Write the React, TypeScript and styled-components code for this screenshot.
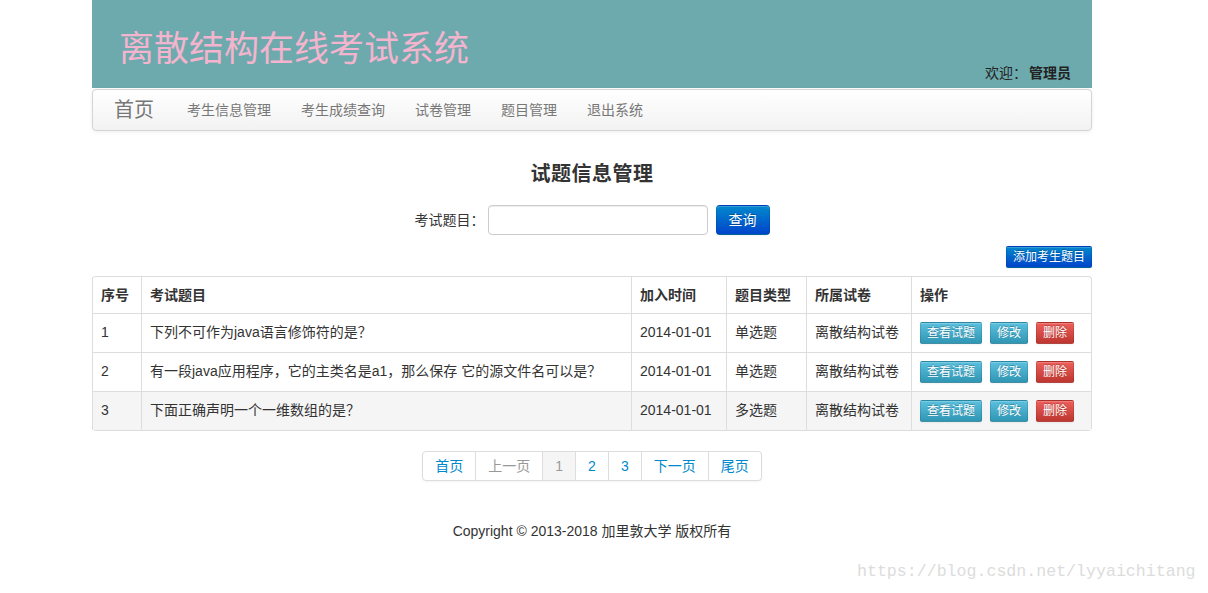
import React from "react";
import styled, { createGlobalStyle, css } from "styled-components";

const FONT = `"Liberation Sans", Arial, "Noto Sans CJK SC", sans-serif`;

const GlobalStyle = createGlobalStyle`
  body {
    margin: 0;
    background: #fff;
    font-family: ${FONT};
    font-size: 14px;
    line-height: 20px;
    color: #333;
  }
`;

const Page = styled.div`
  position: relative;
  min-height: 593px;
`;

const Container = styled.div`
  width: 1000px;
  margin-left: 92px;
`;

const Header = styled.header`
  height: 88px;
  background: #6daaad;
  display: flex;
  align-items: flex-start;
  justify-content: space-between;
  padding: 0 21px 0 27px;
  box-sizing: border-box;
`;

const SiteTitle = styled.h1`
  margin: 28px 0 0;
  font-size: 35px;
  line-height: 42px;
  font-weight: normal;
  color: #f4b4cd;
`;

const Welcome = styled.div`
  align-self: flex-end;
  margin-bottom: 5px;
  font-size: 14px;
  line-height: 20px;
  color: #222;
  b {
    font-weight: bold;
    margin-left: 2px;
  }
`;

const Navbar = styled.nav`
  margin-top: 1px;
  height: 42px;
  box-sizing: border-box;
  border: 1px solid #d4d4d4;
  border-radius: 4px;
  background-image: linear-gradient(to bottom, #ffffff, #f2f2f2);
  box-shadow: 0 1px 4px rgba(0, 0, 0, 0.065);
  display: flex;
  align-items: center;
  padding: 0 20px 0 21px;
`;

const Brand = styled.a`
  font-size: 20px;
  line-height: 20px;
  padding: 10px 18px 10px 0;
  color: #777;
  text-decoration: none;
`;

const NavLink = styled.a`
  font-size: 14px;
  line-height: 20px;
  padding: 10px 15px;
  color: #777;
  text-decoration: none;
`;

const PageTitle = styled.h3`
  margin: 31px 0 19px;
  text-align: center;
  font-size: 20px;
  line-height: 24px;
  font-weight: bold;
  color: #333;
  letter-spacing: 0.5px;
`;

const SearchForm = styled.form`
  display: flex;
  justify-content: center;
  align-items: center;
  margin: 0;
`;

const Label = styled.label`
  font-size: 14px;
  margin-right: 3px;
`;

const Input = styled.input`
  width: 220px;
  height: 30px;
  box-sizing: border-box;
  border: 1px solid #ccc;
  border-radius: 4px;
  box-shadow: inset 0 1px 1px rgba(0, 0, 0, 0.075);
  margin-right: 8px;
  padding: 4px 6px;
  font-family: ${FONT};
`;

type Variant = "primary" | "info" | "danger";

const gradients: Record<Variant, [string, string]> = {
  primary: ["#0088cc", "#0044cc"],
  info: ["#5bc0de", "#2f96b4"],
  danger: ["#ee5f5b", "#bd362f"],
};

const Button = styled.button<{ $variant: Variant; $size?: "mini" }>`
  font-family: ${FONT};
  color: #fff;
  cursor: pointer;
  background-image: linear-gradient(
    to bottom,
    ${(p) => gradients[p.$variant][0]},
    ${(p) => gradients[p.$variant][1]}
  );
  border: 1px solid;
  border-color: rgba(0, 0, 0, 0.1) rgba(0, 0, 0, 0.1) rgba(0, 0, 0, 0.25);
  text-shadow: 0 -1px 0 rgba(0, 0, 0, 0.25);
  box-shadow: inset 0 1px 0 rgba(255, 255, 255, 0.2),
    0 1px 2px rgba(0, 0, 0, 0.05);
  ${(p) =>
    p.$size === "mini"
      ? css`
          font-size: 12px;
          line-height: 20px;
          padding: 0 6px;
          border-radius: 2px;
        `
      : css`
          font-size: 14px;
          line-height: 20px;
          padding: 4px 12px;
          border-radius: 4px;
        `}
`;

const Toolbar = styled.div`
  display: flex;
  justify-content: flex-end;
  margin: 11px 0 8px;
`;

const Table = styled.table`
  width: 1000px;
  box-sizing: border-box;
  border-collapse: separate;
  border-spacing: 0;
  border: 1px solid #ddd;
  border-left: 0;
  border-radius: 4px;
  table-layout: fixed;
`;

const Th = styled.th<{ $w: number }>`
  width: ${(p) => p.$w}px;
  box-sizing: border-box;
  text-align: left;
  font-weight: bold;
  padding: 8px;
  line-height: 20px;
  border-left: 1px solid #ddd;
  vertical-align: top;
`;

const Tr = styled.tr<{ $hover?: boolean }>`
  background: ${(p) => (p.$hover ? "#f5f5f5" : "transparent")};
`;

const Td = styled.td`
  padding: 8px;
  line-height: 20px;
  border-left: 1px solid #ddd;
  border-top: 1px solid #ddd;
  vertical-align: top;
  white-space: nowrap;
`;

const Actions = styled.div`
  display: flex;
  gap: 8px;
`;

const Pagination = styled.div`
  display: flex;
  justify-content: center;
  margin-top: 20px;
`;

const PageList = styled.ul`
  display: flex;
  margin: 0;
  padding: 0;
  list-style: none;
  border-radius: 4px;
  box-shadow: 0 1px 2px rgba(0, 0, 0, 0.05);
`;

const PageItem = styled.li<{ $state?: "disabled" | "active" }>`
  padding: 4px 12px;
  line-height: 20px;
  border: 1px solid #ddd;
  border-left-width: 0;
  color: ${(p) => (p.$state ? "#999" : "#0088cc")};
  background: ${(p) => (p.$state === "active" ? "#f5f5f5" : "#fff")};
  &:first-child {
    border-left-width: 1px;
    border-radius: 4px 0 0 4px;
  }
  &:last-child {
    border-radius: 0 4px 4px 0;
  }
`;

const Footer = styled.footer`
  margin-top: 40px;
  text-align: center;
  font-size: 14px;
  line-height: 20px;
  color: #333;
`;

const Watermark = styled.div`
  position: absolute;
  left: 857px;
  top: 562px;
  font-family: "Liberation Mono", monospace;
  font-size: 16.6px;
  line-height: 20px;
  color: #dcdcdc;
`;

const rows = [
  { id: 1, title: "下列不可作为java语言修饰符的是？", type: "单选题" },
  { id: 2, title: "有一段java应用程序，它的主类名是a1，那么保存 它的源文件名可以是？", type: "单选题" },
  { id: 3, title: "下面正确声明一个一维数组的是？", type: "多选题" },
];

export default function App() {
  return (
    <Page>
      <GlobalStyle />
      <Container>
        <Header>
          <SiteTitle>离散结构在线考试系统</SiteTitle>
          <Welcome>
            欢迎：<b>管理员</b>
          </Welcome>
        </Header>
        <Navbar>
          <Brand>首页</Brand>
          <NavLink>考生信息管理</NavLink>
          <NavLink>考生成绩查询</NavLink>
          <NavLink>试卷管理</NavLink>
          <NavLink>题目管理</NavLink>
          <NavLink>退出系统</NavLink>
        </Navbar>
        <PageTitle>试题信息管理</PageTitle>
        <SearchForm onSubmit={(e) => e.preventDefault()}>
          <Label>考试题目：</Label>
          <Input type="text" />
          <Button $variant="primary" type="submit">
            查询
          </Button>
        </SearchForm>
        <Toolbar>
          <Button $variant="primary" $size="mini">
            添加考生题目
          </Button>
        </Toolbar>
        <Table>
          <thead>
            <tr>
              <Th $w={49}>序号</Th>
              <Th $w={490}>考试题目</Th>
              <Th $w={95}>加入时间</Th>
              <Th $w={80}>题目类型</Th>
              <Th $w={105}>所属试卷</Th>
              <Th $w={180}>操作</Th>
            </tr>
          </thead>
          <tbody>
            {rows.map((r) => (
              <Tr key={r.id} $hover={r.id === 3}>
                <Td>{r.id}</Td>
                <Td>{r.title}</Td>
                <Td>2014-01-01</Td>
                <Td>{r.type}</Td>
                <Td>离散结构试卷</Td>
                <Td>
                  <Actions>
                    <Button $variant="info" $size="mini">查看试题</Button>
                    <Button $variant="info" $size="mini">修改</Button>
                    <Button $variant="danger" $size="mini">删除</Button>
                  </Actions>
                </Td>
              </Tr>
            ))}
          </tbody>
        </Table>
        <Pagination>
          <PageList>
            <PageItem>首页</PageItem>
            <PageItem $state="disabled">上一页</PageItem>
            <PageItem $state="active">1</PageItem>
            <PageItem>2</PageItem>
            <PageItem>3</PageItem>
            <PageItem>下一页</PageItem>
            <PageItem>尾页</PageItem>
          </PageList>
        </Pagination>
        <Footer>Copyright © 2013-2018 加里敦大学 版权所有</Footer>
      </Container>
      <Watermark>https://blog.csdn.net/lyyaichitang</Watermark>
    </Page>
  );
}
